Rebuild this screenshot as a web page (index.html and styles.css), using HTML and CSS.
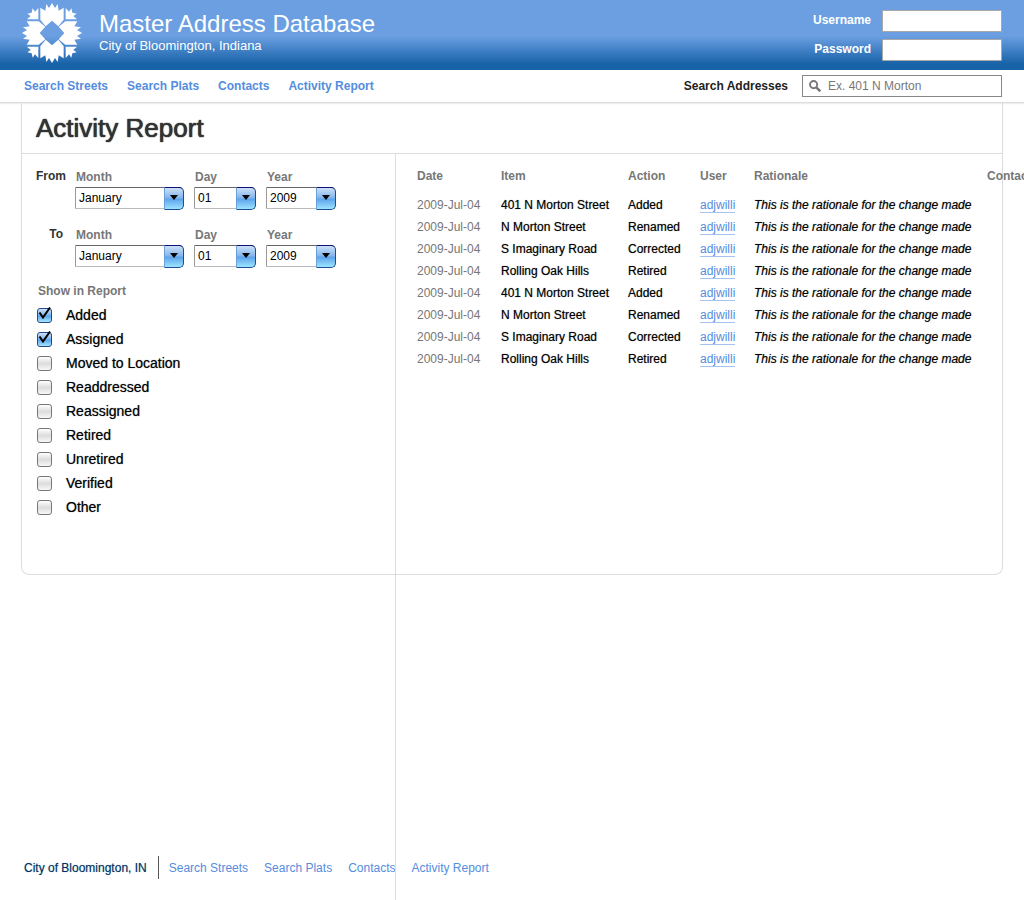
FILE: index.html
```html
<!DOCTYPE html>
<html lang="en">
<head>
<meta charset="utf-8">
<title>Master Address Database - Activity Report</title>
<link rel="stylesheet" href="styles.css">
</head>
<body>
<div class="page">
  <header class="banner">
    <svg class="logo" viewBox="-90 -90 180 180" aria-hidden="true">
      <defs>
        <path id="leaf" d="M0-90 9-75 17-87 20-67 35-76V-40L19-20 0-37-19-20-35-40V-76L-20-67-17-87-9-75Z"/>
        <path id="bud" d="M-41-41V-75L-51-64-58-74-61-61-74-58-64-51-75-41Z"/>
      </defs>
      <g fill="#fff">
        <use href="#leaf"/><use href="#leaf" transform="rotate(90)"/><use href="#leaf" transform="rotate(180)"/><use href="#leaf" transform="rotate(270)"/>
        <use href="#bud"/><use href="#bud" transform="rotate(90)"/><use href="#bud" transform="rotate(180)"/><use href="#bud" transform="rotate(270)"/>
      </g>
    </svg>
    <div class="brand">
      <div class="brand-name">Master Address Database</div>
      <div class="brand-city">City of Bloomington, Indiana</div>
    </div>
    <form class="login">
      <label for="username">Username</label><input id="username" type="text">
      <label for="password">Password</label><input id="password" type="password">
    </form>
  </header>
  <div class="toolbar">
    <nav class="menu">
      <a href="#">Search Streets</a><a href="#">Search Plats</a><a href="#">Contacts</a><a href="#">Activity Report</a>
    </nav>
    <form class="search">
      <label for="search">Search Addresses</label>
      <div class="search-box">
        <svg class="search-icon" viewBox="0 0 12 12" aria-hidden="true"><circle cx="4.6" cy="4.6" r="3.6" fill="none" stroke="#777" stroke-width="1.9"/><path d="M7.3 7.3 11.3 11.3" stroke="#777" stroke-width="2.5"/></svg>
        <input id="search" type="text" placeholder="Ex. 401 N Morton">
      </div>
    </form>
  </div>
  <main class="panel">
    <h1>Activity Report</h1>
    <div class="columns">
      <form class="filters">
        <div class="dates">
          <span class="range">From</span>
          <div class="field"><label for="from-month">Month</label><span class="picker"><select id="from-month"><option>January</option></select></span></div>
          <div class="field"><label for="from-day">Day</label><span class="picker"><select id="from-day"><option>01</option></select></span></div>
          <div class="field"><label for="from-year">Year</label><span class="picker"><select id="from-year"><option>2009</option></select></span></div>
          <span class="range range-to">To</span>
          <div class="field"><label for="to-month">Month</label><span class="picker"><select id="to-month"><option>January</option></select></span></div>
          <div class="field"><label for="to-day">Day</label><span class="picker"><select id="to-day"><option>01</option></select></span></div>
          <div class="field"><label for="to-year">Year</label><span class="picker"><select id="to-year"><option>2009</option></select></span></div>
        </div>
        <fieldset class="options">
          <legend>Show in Report</legend>
          <label><span class="tick"><input type="checkbox" checked><svg viewBox="0 0 16 16"><path d="M3.5 6.5 7 11.5 14 1.5" /></svg></span>Added</label>
          <label><span class="tick"><input type="checkbox" checked><svg viewBox="0 0 16 16"><path d="M3.5 6.5 7 11.5 14 1.5" /></svg></span>Assigned</label>
          <label><span class="tick"><input type="checkbox"></span>Moved to Location</label>
          <label><span class="tick"><input type="checkbox"></span>Readdressed</label>
          <label><span class="tick"><input type="checkbox"></span>Reassigned</label>
          <label><span class="tick"><input type="checkbox"></span>Retired</label>
          <label><span class="tick"><input type="checkbox"></span>Unretired</label>
          <label><span class="tick"><input type="checkbox"></span>Verified</label>
          <label><span class="tick"><input type="checkbox"></span>Other</label>
        </fieldset>
      </form>
      <section class="results">
        <table>
          <colgroup><col class="c-date"><col class="c-item"><col class="c-action"><col class="c-user"><col class="c-why"><col class="c-contact"></colgroup>
          <thead><tr><th>Date</th><th>Item</th><th>Action</th><th>User</th><th>Rationale</th><th>Contact</th></tr></thead>
          <tbody>
            <tr><td>2009-Jul-04</td><td>401 N Morton Street</td><td>Added</td><td><a href="#">adjwilli</a></td><td>This is the rationale for the change made</td><td></td></tr>
            <tr><td>2009-Jul-04</td><td>N Morton Street</td><td>Renamed</td><td><a href="#">adjwilli</a></td><td>This is the rationale for the change made</td><td></td></tr>
            <tr><td>2009-Jul-04</td><td>S Imaginary Road</td><td>Corrected</td><td><a href="#">adjwilli</a></td><td>This is the rationale for the change made</td><td></td></tr>
            <tr><td>2009-Jul-04</td><td>Rolling Oak Hills</td><td>Retired</td><td><a href="#">adjwilli</a></td><td>This is the rationale for the change made</td><td></td></tr>
            <tr><td>2009-Jul-04</td><td>401 N Morton Street</td><td>Added</td><td><a href="#">adjwilli</a></td><td>This is the rationale for the change made</td><td></td></tr>
            <tr><td>2009-Jul-04</td><td>N Morton Street</td><td>Renamed</td><td><a href="#">adjwilli</a></td><td>This is the rationale for the change made</td><td></td></tr>
            <tr><td>2009-Jul-04</td><td>S Imaginary Road</td><td>Corrected</td><td><a href="#">adjwilli</a></td><td>This is the rationale for the change made</td><td></td></tr>
            <tr><td>2009-Jul-04</td><td>Rolling Oak Hills</td><td>Retired</td><td><a href="#">adjwilli</a></td><td>This is the rationale for the change made</td><td></td></tr>
          </tbody>
        </table>
      </section>
    </div>
  </main>
  <footer class="footer">
    <span class="footer-city">City of Bloomington, IN</span>
    <nav class="footer-menu"><a href="#">Search Streets</a><a href="#">Search Plats</a><a href="#">Contacts</a><a href="#">Activity Report</a></nav>
  </footer>
  <div class="divider"></div>
</div>
</body>
</html>
```
FILE: styles.css
```css
* { box-sizing: border-box; }
body {
  margin: 0;
  background: #fff;
  color: #000;
  font: 12px/16px "Liberation Sans", Arial, sans-serif;
}
input, select { font: inherit; color: inherit; }
a { color: #548dde; text-decoration: none; }

.page {
  position: relative;
  display: flex;
  flex-direction: column;
  min-height: 100vh;
  overflow-x: hidden;
}

/* Banner */
.banner {
  display: flex;
  align-items: center;
  height: 70px;
  padding: 0 22px;
  color: #fff;
  background: linear-gradient(#6b9fe2 0, #6b9fe2 36px, #1862a8 64px, #1862a8 100%);
}
.logo { width: 60px; height: 60px; margin-bottom: 4px; }
.brand { margin: 0 auto 6px 17px; }
.brand-name { font-size: 24px; line-height: 28px; }
.brand-city { font-size: 13px; line-height: 16px; }
.login {
  display: grid;
  grid-template-columns: auto 120px;
  gap: 7px 11px;
  align-items: center;
  font-weight: bold;
  text-align: right;
}
.login label { padding-bottom: 2px; }
.login input {
  width: 100%;
  height: 22px;
  padding: 0 4px;
  border: 1px solid #a9a9a9;
  border-radius: 1px;
  background: #fff;
  color: #000;
}

/* Toolbar */
.toolbar {
  display: flex;
  align-items: center;
  justify-content: space-between;
  height: 33px;
  padding: 0 22px 0 24px;
  border-bottom: 1px solid #ddd;
  box-shadow: 0 1px 1px #eee;
}
.menu { display: flex; gap: 19px; font-weight: bold; }
.search {
  display: flex;
  align-items: center;
  gap: 14px;
  color: #222;
  font-weight: bold;
}
.search-box {
  display: flex;
  align-items: center;
  gap: 7px;
  width: 200px;
  height: 22px;
  padding: 0 6px;
  border: 1px solid #888;
  font-weight: normal;
}
.search-icon { flex: none; width: 12px; height: 12px; }
.search-box input {
  flex: 1;
  min-width: 0;
  padding: 0;
  border: 0;
  outline: 0;
  background: none;
}
.search-box input::placeholder { color: #777; opacity: 1; }

/* Report panel */
.panel {
  min-height: 472px;
  margin: 0 21px;
  border: 1px solid #ddd;
  border-top: 0;
  border-radius: 0 0 8px 8px;
}
h1 {
  margin: 0;
  padding: 10px 14px;
  border-bottom: 1px solid #ddd;
  color: #333;
  font-size: 26px;
  font-weight: normal;
  line-height: 30px;
  text-shadow: 0 0 1px #333, 0 0 1px #333;
}
.columns {
  display: grid;
  grid-template-columns: 374px minmax(0, 1fr);
}
.filters { padding: 15px 14px; }
.dates {
  display: grid;
  grid-template-columns: 29px 109px 62px 70px;
  gap: 18px 10px;
}
.range { color: #333; font-weight: bold; text-align: right; line-height: 14px; }
.range-to { padding-right: 2px; }
.field { display: flex; flex-direction: column; gap: 2px; }
.field label { padding-left: 1px; color: #777; font-weight: bold; }
.picker { position: relative; display: block; }
.picker select {
  display: block;
  appearance: none;
  width: 100%;
  height: 22px;
  padding: 0 20px 0 3px;
  border: 1px solid #999;
  border-top-color: #666;
  border-bottom-color: #bbb;
  border-radius: 0 5px 5px 0;
  background: #fff;
}
.picker::before {
  content: "";
  position: absolute;
  top: 0;
  right: 0;
  width: 18px;
  height: 21px;
  border: 1px solid #1c4f98;
  border-top-color: #10107a;
  border-left-color: #6aa0d8;
  border-radius: 0 5px 5px 0;
  background: linear-gradient(#cde0f6, #82b4ee 48%, #5ba2ec 52%, #9de4ff);
  pointer-events: none;
}
.picker::after {
  content: "";
  position: absolute;
  top: 8px;
  right: 6px;
  border: 4px solid transparent;
  border-top: 5px solid #000;
  border-bottom: 0;
  pointer-events: none;
}
.options {
  margin: 16px 0 0;
  padding: 0;
  border: 0;
  font-size: 14px;
}
.options legend {
  padding: 0 2px 4px;
  color: #777;
  font-size: 12px;
  font-weight: bold;
}
.options label {
  display: flex;
  align-items: center;
  gap: 14px;
  height: 24px;
  text-shadow: 0 0 1px #777;
}
.tick { position: relative; display: flex; width: 16px; padding-left: 1px; }
.tick input {
  appearance: none;
  width: 15px;
  height: 15px;
  margin: 0;
  border: 1px solid #777;
  border-radius: 3px;
  background: linear-gradient(#fff, #dcdcdc 50%, #f8f8f8);
}
.tick input:checked {
  border-color: #244a8c;
  background: linear-gradient(#cde0f6, #7db2ee 48%, #5ba2ec 52%, #a4e6ff);
}
.tick svg {
  position: absolute;
  top: -2px;
  left: 0;
  width: 16px;
  height: 16px;
  fill: none;
  stroke: #000;
  stroke-width: 2;
  pointer-events: none;
}

/* Results table */
.results { padding: 10px 0 0 21px; }
table {
  width: 640px;
  border-collapse: collapse;
  table-layout: fixed;
  white-space: nowrap;
}
.c-date { width: 84px; }
.c-item { width: 127px; }
.c-action { width: 72px; }
.c-user { width: 54px; }
.c-why { width: 233px; }
.c-contact { width: 70px; }
th, td { height: 22px; padding: 0; text-align: left; }
th { height: 30px; padding-bottom: 7px; color: #777; }
td { text-shadow: 0 0 1px #888; }
td:nth-child(1) { color: #777; text-shadow: none; }
td:nth-child(4) { text-shadow: none; }
td:nth-child(4) a { border-bottom: 1px solid #a5c3ee; }
td:nth-child(5) { font-style: italic; }

/* Footer */
.footer {
  display: flex;
  align-items: center;
  margin-top: auto;
  padding: 0 24px 21px;
}
.footer-city {
  padding: 4px 11px 3px 0;
  border-right: 1px solid #555;
  color: #023266;
  text-shadow: 0 0 1px #8aa;
}
.footer-menu { display: flex; gap: 16px; padding-left: 10px; }

.divider {
  position: absolute;
  top: 154px;
  bottom: 0;
  left: 395px;
  width: 1px;
  background: #ddd;
}
```
